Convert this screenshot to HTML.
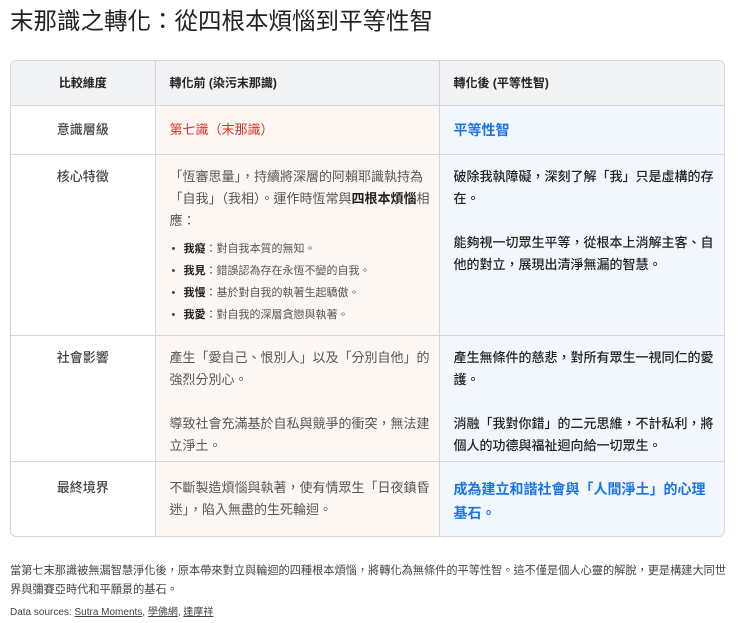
<!DOCTYPE html>
<html><head><meta charset="utf-8"><style>
*{margin:0;padding:0;box-sizing:border-box}
body{width:740px;height:623px;background:#fff;font-family:"Liberation Sans","Noto Sans CJK TC",sans-serif;color:#333;position:relative;overflow:hidden}
h1{position:absolute;left:10px;top:2px;font-size:23.5px;font-weight:400;color:#222;white-space:nowrap}
.tbl{position:absolute;left:10px;top:60px;width:715px;height:477px;border:1px solid #d6d6d6;border-radius:6px;overflow:hidden}
table{border-collapse:collapse;width:100%;table-layout:fixed}
td{border-right:1px solid #d6d6d6;border-bottom:1px solid #d6d6d6;vertical-align:top;font-size:13px;line-height:22px}
td:last-child{border-right:none}
tr:last-child td{border-bottom:none}
.c1{width:144px;text-align:center;color:#444;font-weight:500}
.c2{width:284px;background:#fdf7f4;color:#555;padding-left:14px;padding-right:6px}
.c3{background:#f1f7fd;color:#222;font-weight:500;padding-left:14px;padding-right:4px}
tr.h td{background:#f1f3f4;height:44px;vertical-align:middle;font-weight:700;color:#222;font-size:12px}
ul{list-style:none;margin-top:6px}
li{font-size:11px;line-height:22px;position:relative;padding-left:14px}
li:before{content:"•";position:absolute;left:2px;color:#444}
li b{color:#222}
p.f{position:absolute;left:10px;top:562px;width:726px;font-size:11.2px;line-height:19px;color:#444}
p.s{position:absolute;left:10px;top:603px;font-size:10px;color:#444}
p.s a{color:#444;text-decoration:underline}
</style></head><body>
<h1>末那識之轉化：從四根本煩惱到平等性智</h1>
<div class="tbl"><table>
<tr class="h"><td class="c1">比較維度</td><td class="c2">轉化前 (染污末那識)</td><td class="c3">轉化後 (平等性智)</td></tr>
<tr style="height:49px"><td class="c1" style="padding-top:13px">意識層級</td><td class="c2" style="padding-top:13px;color:#d93025">第七識（末那識）</td><td class="c3" style="padding-top:13px;color:#1a73e8;font-weight:700;font-size:14px">平等性智</td></tr>
<tr style="height:181px"><td class="c1" style="padding-top:11px">核心特徵</td><td class="c2" style="padding-top:11px">「恆審思量」，持續將深層的阿賴耶識執持為「自我」（我相）。運作時恆常與<b style="color:#222">四根本煩惱</b>相應：
<ul><li><b>我癡</b>：對自我本質的無知。</li><li><b>我見</b>：錯誤認為存在永恆不變的自我。</li><li><b>我慢</b>：基於對自我的執著生起驕傲。</li><li><b>我愛</b>：對自我的深層貪戀與執著。</li></ul></td>
<td class="c3" style="padding-top:11px">破除我執障礙，深刻了解「我」只是虛構的存在。<br><br>能夠視一切眾生平等，從根本上消解主客、自他的對立，展現出清淨無漏的智慧。</td></tr>
<tr style="height:126px"><td class="c1" style="padding-top:11px">社會影響</td><td class="c2" style="padding-top:11px">產生「愛自己、恨別人」以及「分別自他」的強烈分別心。<br><br>導致社會充滿基於自私與競爭的衝突，無法建立淨土。</td><td class="c3" style="padding-top:11px">產生無條件的慈悲，對所有眾生一視同仁的愛護。<br><br>消融「我對你錯」的二元思維，不計私利，將個人的功德與福祉迴向給一切眾生。</td></tr>
<tr style="height:77px"><td class="c1" style="padding-top:15px">最終境界</td><td class="c2" style="padding-top:15px">不斷製造煩惱與執著，使有情眾生「日夜鎮昏迷」，陷入無盡的生死輪迴。</td><td class="c3" style="padding-top:15px;padding-right:14px;color:#1a73e8;font-weight:700;font-size:14px;line-height:24px">成為建立和諧社會與「人間淨土」的心理基石。</td></tr>
</table></div>
<p class="f">當第七末那識被無漏智慧淨化後，原本帶來對立與輪迴的四種根本煩惱，將轉化為無條件的平等性智。這不僅是個人心靈的解脫，更是構建大同世界與彌賽亞時代和平願景的基石。</p>
<p class="s">Data sources: <a>Sutra Moments</a>, <a>學佛網</a>, <a>達摩祥</a></p>
</body></html>
